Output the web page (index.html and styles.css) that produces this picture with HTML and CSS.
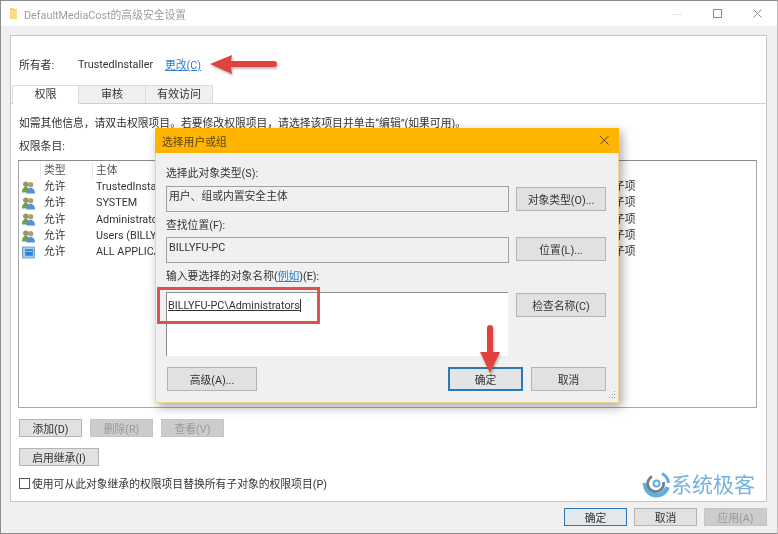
FILE: index.html
```html
<!DOCTYPE html>
<html lang="zh-CN">
<head>
<meta charset="utf-8">
<title>DefaultMediaCost的高级安全设置</title>
<link rel="stylesheet" href="styles.css">
</head>
<body>
<div class="window">
  <header class="titlebar">
    <svg class="folder" width="8" height="11" viewBox="0 0 8 11"><path d="M0 0h3l1 1h3v10H0z" fill="#f5cd62"/><path d="M0 2h7v9H0z" fill="#fbdc82"/></svg>
    <span class="title">DefaultMediaCost的高级安全设置</span>
    <div class="controls">
      <svg width="10" height="10" viewBox="0 0 10 10"><path d="M0 5.500h9" stroke="#e4e4e4"/></svg>
      <svg width="10" height="10" viewBox="0 0 10 10"><rect x=".5" y=".5" width="8" height="8" fill="none" stroke="#8c8c8c"/></svg>
      <svg width="10" height="10" viewBox="0 0 10 10"><path d="M.5.500l8 8M8.500.500l-8 8" stroke="#8c8c8c" fill="none"/></svg>
    </div>
  </header>

  <main class="panel">
    <div class="owner">
      <span class="owner-label">所有者:</span>
      <span class="owner-name">TrustedInstaller</span>
      <a class="link">更改(C)</a>
    </div>
    <div class="tabs">
      <span class="tab tab-active">权限</span>
      <span class="tab">审核</span>
      <span class="tab">有效访问</span>
    </div>
    <section class="tab-body">
      <p class="hint">如需其他信息，请双击权限项目。若要修改权限项目，请选择该项目并单击“编辑”(如果可用)。</p>
      <p class="entries-label">权限条目:</p>
      <div class="list">
        <div class="list-row list-head"><span></span><span class="cell">类型</span><span class="cell">主体</span><span></span></div>
        <div class="list-row"><svg class="ico" viewBox="0 0 12 12"><use href="#users"/></svg><span class="cell">允许</span><span class="cell">TrustedInstaller</span><span class="cell">子项</span></div>
        <div class="list-row"><svg class="ico" viewBox="0 0 12 12"><use href="#users"/></svg><span class="cell">允许</span><span class="cell">SYSTEM</span><span class="cell">子项</span></div>
        <div class="list-row"><svg class="ico" viewBox="0 0 12 12"><use href="#users"/></svg><span class="cell">允许</span><span class="cell">Administrators</span><span class="cell">子项</span></div>
        <div class="list-row"><svg class="ico" viewBox="0 0 12 12"><use href="#users"/></svg><span class="cell">允许</span><span class="cell">Users (BILLYFU</span><span class="cell">子项</span></div>
        <div class="list-row"><svg class="ico" viewBox="0 0 12 12"><rect x=".5" y="1" width="11" height="10" fill="#a9cdec" stroke="#7aa5cc"/><rect x="3" y="3" width="7" height="6" fill="#2f7fd0"/><path d="M4 5h1M6 5h1M8 5h1" stroke="#fff"/></svg><span class="cell">允许</span><span class="cell">ALL APPLICAT</span><span class="cell">子项</span></div>
      </div>
      <div class="actions">
        <button class="btn btn-small">添加(D)</button>
        <button class="btn btn-small btn-disabled">删除(R)</button>
        <button class="btn btn-small btn-disabled">查看(V)</button>
      </div>
      <button class="btn btn-inherit">启用继承(I)</button>
      <label class="replace"><span class="checkbox"></span>使用可从此对象继承的权限项目替换所有子对象的权限项目(P)</label>
    </section>
  </main>

  <footer class="footer">
    <button class="btn btn-small btn-default">确定</button>
    <button class="btn btn-small">取消</button>
    <button class="btn btn-small btn-disabled">应用(A)</button>
  </footer>

  <div class="dialog">
    <div class="dialog-title">
      <span>选择用户或组</span>
      <svg width="11" height="11" viewBox="0 0 11 11"><path d="M1 1l8.500 8.500M9.500 1L1 9.500" stroke="#5a4a20" fill="none"/></svg>
    </div>
    <div class="dialog-body">
      <div class="field-label">选择此对象类型(S):</div>
      <div class="field-row">
        <div class="readonly">用户、组或内置安全主体</div>
        <button class="btn btn-side">对象类型(O)...</button>
      </div>
      <div class="field-label field-label-tight">查找位置(F):</div>
      <div class="field-row">
        <div class="readonly">BILLYFU-PC</div>
        <button class="btn btn-side btn-flush">位置(L)...</button>
      </div>
      <div class="field-label field-label-wide">输入要选择的对象名称(<a class="link">例如</a>)(E):</div>
      <div class="field-row">
        <div class="names"><span class="names-text">BILLYFU-PC\Administrators</span></div>
        <button class="btn btn-side">检查名称(C)</button>
      </div>
      <div class="dialog-actions">
        <button class="btn btn-side btn-flush">高级(A)...</button>
        <span class="spacer"></span>
        <button class="btn btn-side btn-flush btn-ok">确定</button>
        <button class="btn btn-side btn-flush">取消</button>
      </div>
    </div>
    <svg class="grip" width="8" height="8" viewBox="0 0 8 8"><path d="M6 0h1v1H6zM4 3h1v1H4zM6 3h1v1H6zM1 6h1v1H1zM4 6h1v1H4zM6 6h1v1H6z" fill="#9a9a9a"/></svg>
  </div>

  <div class="highlight"></div>
  <svg class="arrow arrow-left" width="72" height="24" viewBox="0 0 72 24"><path d="M2 11 L24 2 L23 8 L66 8 Q69 8 69 11 Q69 14 66 14 L23 14 L24 21 Z" fill="#e0433e"/></svg>
  <svg class="arrow arrow-down" width="24" height="52" viewBox="0 0 24 52"><path d="M9 5 Q9 2 12 2 Q15 2 15 5 L15 29 L22 29 L12 50 L2 29 L9 29 Z" fill="#e0433e"/></svg>

  <div class="watermark">
    <svg width="28" height="26" viewBox="0 0 28 26">
      <path d="M3 11A11.500 11.500 0 0 0 25.500 15" fill="none" stroke="#62ace0" stroke-width="4.500"/>
      <path d="M20 1.500A12 12 0 0 1 26.500 11" fill="none" stroke="#62ace0" stroke-width="3"/>
      <path d="M10 4.500A8 8 0 1 0 21.500 10" fill="none" stroke="#6f7f8c" stroke-width="2.800"/>
      <circle cx="14.500" cy="11.500" r="3" fill="none" stroke="#62ace0" stroke-width="2"/>
    </svg>
    <span class="wm-text">系统极客</span>
  </div>
</div>

<svg class="defs" width="0" height="0">
  <symbol id="users" viewBox="0 0 12 12">
    <circle cx="3.500" cy="3" r="2.500" fill="#8a9e62"/>
    <path d="M0 10.500c0-3.500 1.500-5 3.500-5S7 7 7 10.500z" fill="#74a04e"/>
    <circle cx="8" cy="3.500" r="2.500" fill="#b89a78"/>
    <path d="M4 11.500c0-3.500 2-5 4-5s4 1.500 4 5z" fill="#4f93d8"/>
  </symbol>
</svg>
</body>
</html>
```
FILE: styles.css
```css
* { box-sizing: border-box; }
html, body { margin: 0; padding: 0; }
body {
  width: 778px;
  height: 534px;
  overflow: hidden;
  font-family: Roboto, "Noto Sans CJK SC", sans-serif;
  font-size: 10.800px;
  color: #333;
  background: #fff;
}
p { margin: 0; }
.defs { position: absolute; }

.window {
  position: relative;
  width: 778px;
  height: 534px;
  display: flex;
  flex-direction: column;
  background: #f0f0f0;
  border: 1px solid #8d8d8d;
  border-right-color: #bdbdbd;
  overflow: hidden;
  filter: blur(.35px);
}

.titlebar {
  height: 25px;
  flex: none;
  display: flex;
  align-items: center;
  padding-left: 9px;
  background: #fff;
}
.folder { margin-right: 6px; }
.title { color: #9c9c9c; }
.controls {
  margin-left: auto;
  display: flex;
  gap: 30px;
  padding-right: 14px;
}

.panel {
  margin: 9px 10px 0 9px;
  height: 467px;
  flex: none;
  background: #fff;
  border: 1px solid #c6c6c6;
  display: flex;
  flex-direction: column;
}
.owner {
  height: 49px;
  flex: none;
  display: flex;
  align-items: center;
  padding: 7px 0 0 8px;
}
.owner-label { width: 59px; }
.owner-name { width: 87px; }
.link { color: #2f80c8; text-decoration: underline; }

.tabs {
  height: 19px;
  flex: none;
  display: flex;
  border-bottom: 1px solid #cfcfcf;
  padding-left: 1px;
}
.tab {
  width: 67px;
  height: 18px;
  background: #f0f0f0;
  border: 1px solid #dcdcdc;
  border-bottom: 0;
  border-left: 0;
  text-align: center;
  line-height: 17px;
  font-size: 11px;
}
.tab-active {
  height: 19px;
  background: #fff;
  border-left: 1px solid #dcdcdc;
  position: relative;
  z-index: 1;
}

.tab-body {
  flex: 1;
  display: flex;
  flex-direction: column;
  padding: 0 9px 0 7px;
}
.hint { margin: 12px 0 0 1px; line-height: 16px; }
.entries-label { margin: 7px 0 0 1px; line-height: 16px; }
.list {
  margin-top: 5px;
  height: 248px;
  flex: none;
  background: #fff;
  border: 1px solid #a8a8a8;
  border-top-color: #8c8c8c;
  padding-top: 1px;
}
.list-row {
  display: grid;
  grid-template-columns: 25px 52px 518px 40px;
  height: 16.300px;
  line-height: 16px;
  align-items: center;
}
.list-head { height: 17px; color: #555; }
.list-head .cell { border-left: 1px solid #e6e6e6; padding-left: 3px; margin-left: -4px; }
.cell { white-space: nowrap; overflow: hidden; }
.ico { width: 13px; height: 13px; margin-left: 3px; }

.btn {
  font: inherit;
  color: #333;
  padding: 0;
  height: 18px;
  background: #e1e1e1;
  border: 1px solid #b4b4b4;
  border-radius: 0;
}
.btn-small { width: 63px; }
.btn-disabled { background: #cccccc; border-color: #c4c4c4; color: #999; }
.btn-default { border: 1.500px solid #2a77b6; background: #e3e8ec; }
.btn-inherit { width: 80px; margin: 11px 0 0 1px; }
.actions { display: flex; gap: 8px; margin: 11px 0 0 1px; }

.replace {
  margin: 9px 0 0 1px;
  display: flex;
  align-items: center;
  gap: 2px;
}
.checkbox {
  width: 11px;
  height: 11px;
  background: #fff;
  border: 1px solid #555;
}

.footer {
  flex: 1;
  display: flex;
  justify-content: flex-end;
  gap: 7px;
  padding: 6px 10px 0 0;
}

.dialog {
  position: absolute;
  left: 154px;
  top: 127px;
  width: 464px;
  height: 275px;
  background: #f0f0f0;
  border: 1px solid #f0d490;
  box-shadow: 3px 4px 10px rgba(0, 0, 0, .35);
  display: flex;
  flex-direction: column;
  z-index: 2;
}
.dialog-title {
  height: 25px;
  flex: none;
  margin: -1px -1px 0;
  padding: 0 9px 0 7px;
  background: #ffb400;
  color: #5a4420;
  display: flex;
  align-items: center;
  justify-content: space-between;
}
.dialog-body {
  flex: 1;
  padding: 13px 12px 0 10px;
  display: flex;
  flex-direction: column;
}
.field-label { line-height: 16px; height: 16px; margin-bottom: 4px; }
.field-label-tight { margin-bottom: 3px; }
.field-label-wide { margin-bottom: 7px; }
.field-row {
  display: flex;
  justify-content: space-between;
  align-items: flex-start;
  margin-bottom: 6px;
}
.readonly {
  width: 343px;
  height: 26px;
  padding: 0 2px;
  line-height: 19px;
  background: #f0f0f0;
  border: 1px solid #a0a0a0;
}
.btn-side { width: 90px; height: 24px; margin-top: 1px; }
.btn-flush { margin-top: 0; }
.names {
  width: 342px;
  height: 64px;
  background: #fff;
  border-top: 1px solid #8e8e8e;
  border-left: 1px solid #8e8e8e;
  padding: 5px 1px;
  line-height: 16px;
}
.names-text { text-decoration: underline; color: #333; border-right: 1px solid #333; }
.dialog-actions {
  display: flex;
  gap: 8px;
  margin-top: 5px;
  padding-left: 1px;
}
.spacer { flex: 1; }
.btn-ok { width: 75px; border: 2px solid #2a7ab8; background: #e4e4e4; }
.dialog-actions .btn:last-child { width: 75px; }
.grip { position: absolute; right: 2px; bottom: 3px; }

.highlight {
  position: absolute;
  left: 156px;
  top: 286px;
  width: 163px;
  height: 37px;
  border: 3px solid #d9534f;
  z-index: 3;
}
.arrow { position: absolute; z-index: 3; filter: drop-shadow(1px 2px 1px rgba(0, 0, 0, .25)); }
.arrow-left { left: 207px; top: 52px; }
.arrow-down { left: 477px; top: 322px; }

.watermark {
  position: absolute;
  left: 641px;
  top: 471px;
  display: flex;
  align-items: center;
  gap: 1px;
  z-index: 1;
}
.wm-text { font-size: 21px; line-height: 26px; color: #74b2dc; }
```
